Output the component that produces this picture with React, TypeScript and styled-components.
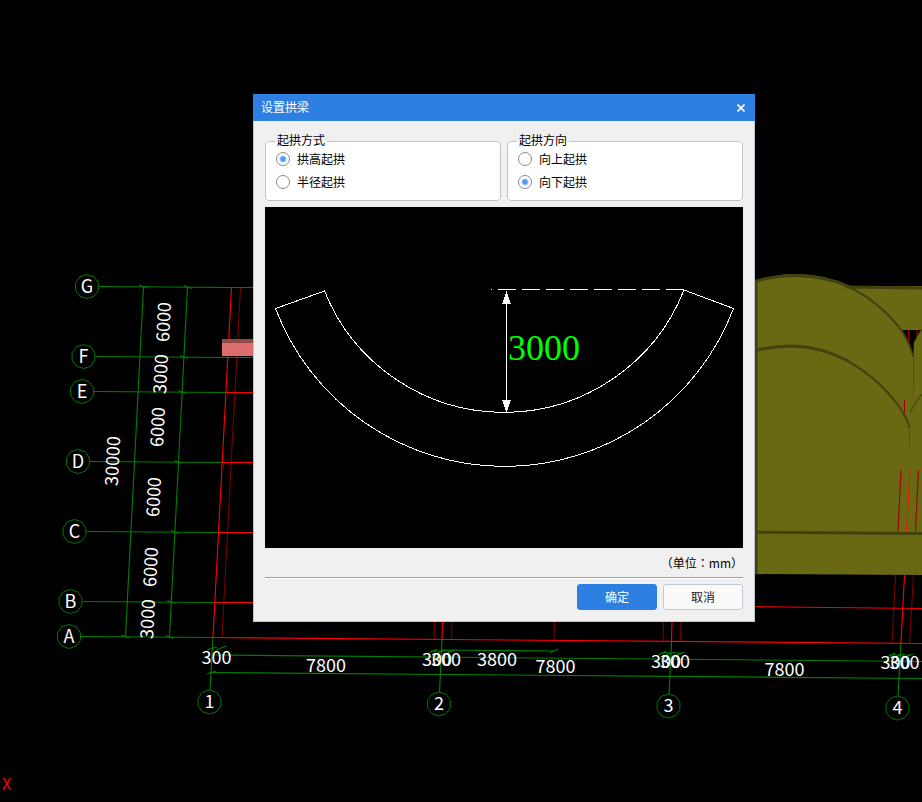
import React, { useState } from 'react';
import styled, { createGlobalStyle } from 'styled-components';

const GlobalStyle = createGlobalStyle`
  * { box-sizing: border-box; }
  html, body { margin: 0; background: #000; }
  body {
    font: 12px/16px "Noto Sans CJK SC", "Noto Sans", sans-serif;
    color: #000;
  }
`;

const Workspace = styled.main`
  position: relative;
  min-height: 100vh;
  overflow: hidden;
  background: #000;
`;

const Drawing = styled.svg`
  display: block;
  width: 100%;
  height: auto;
  fill: none;
  stroke-width: 1.1;
`;

const Label = styled.text`
  font: 18px "Noto Sans CJK SC", sans-serif;
  fill: #fff;
  text-anchor: middle;
`;

const AxisMark = styled.text`
  font: 16px "Noto Sans CJK SC", sans-serif;
  fill: #f00;
`;

const Dialog = styled.section`
  position: absolute;
  top: 94px;
  left: 253px;
  width: 502px;
  max-width: 100%;
  background: #f0f0f0;
`;

const TitleBar = styled.header`
  display: flex;
  align-items: center;
  justify-content: space-between;
  height: 27px;
  padding: 0 8px;
  background: #2d7fe2;
  color: #fff;
`;

const Title = styled.h1`
  margin: 0;
  padding-bottom: 2px;
  font-size: 12px;
  font-weight: 400;
`;

const CloseButton = styled.button`
  display: flex;
  align-items: center;
  justify-content: center;
  width: 12px;
  height: 16px;
  padding: 0;
  border: 0;
  background: none;
  color: #fff;
`;

const Content = styled.form`
  display: flex;
  flex-direction: column;
  padding: 12px 11px 11px;
  border: 1px solid #bac4d6;
  border-top: 0;
`;

const Groups = styled.div`
  display: grid;
  grid-template-columns: 1fr 1fr;
  gap: 6px;
`;

const Group = styled.fieldset`
  min-width: 0;
  margin: 0;
  padding: 0 10px 8px;
  border: 1px solid #c1c4cb;
  border-radius: 4px;
  background: #fff;
`;

const Legend = styled.legend`
  margin-left: -1px;
  padding: 0 2px 2px;
  line-height: 14px;
`;

const Option = styled.label`
  display: flex;
  align-items: center;
  gap: 7px;
  height: 20px;
  & + & { margin-top: 3px; }
`;

const Radio = styled.input`
  appearance: none;
  flex: none;
  width: 14px;
  height: 14px;
  margin: 0;
  border: 1px solid #8a8a8a;
  border-radius: 50%;
  background: #fff;
  &:checked {
    background: radial-gradient(circle, #4a9bf8 0 2px, #fff 4px);
  }
`;

const Preview = styled.svg`
  display: block;
  width: 100%;
  height: auto;
  margin-top: 6px;
  background: #000;
  fill: none;
  stroke: #fff;
  shape-rendering: crispEdges;
`;

const Measure = styled.text`
  font: 36px "Liberation Serif", serif;
  fill: #0f0;
  stroke: none;
`;

const Unit = styled.p`
  margin: 0;
  padding: 7px 0 6px;
  text-align: right;
`;

const Colon = styled.span`
  font-family: "Noto Sans CJK TC", sans-serif;
`;

const Actions = styled.footer`
  display: flex;
  justify-content: flex-end;
  gap: 6px;
  padding-top: 6px;
  border-top: 1px solid #a0a0a0;
  box-shadow: inset 0 1px #fff;
`;

const ActionButton = styled.button<{ $primary?: boolean }>`
  width: 80px;
  height: 26px;
  padding: 0;
  border: 1px solid ${(p) => (p.$primary ? '#2d7fe2' : '#c0c9da')};
  border-radius: 3px;
  background: ${(p) => (p.$primary ? '#2d7fe2' : '#fafafa')};
  color: ${(p) => (p.$primary ? '#fff' : '#222')};
  font: inherit;
`;

type Point = [number, number];

const rowAxes: { name: string; x: number; y: number; red: number }[] = [
  { name: 'G', x: 87, y: 286.5, red: 231 },
  { name: 'F', x: 83.5, y: 356.5, red: 228 },
  { name: 'E', x: 82, y: 391.5, red: 226 },
  { name: 'D', x: 78, y: 461.5, red: 222 },
  { name: 'C', x: 74.5, y: 531.5, red: 219 },
  { name: 'B', x: 70.5, y: 601.5, red: 215 },
  { name: 'A', x: 69, y: 636.5, red: 213 },
];

const columnAxes: { name: string; x: number; y: number; topX: number; topY: number }[] = [
  { name: '1', x: 209.5, y: 702, topX: 213, topY: 637 },
  { name: '2', x: 439, y: 704, topX: 442, topY: 640 },
  { name: '3', x: 668.5, y: 706, topX: 671.5, topY: 642 },
  { name: '4', x: 897.5, y: 708, topX: 901, topY: 643 },
];

const sideLabels: [string, number, number][] = [
  ['6000', 163, 322],
  ['3000', 160, 374],
  ['6000', 157, 427],
  ['30000', 112, 461],
  ['6000', 153, 497],
  ['6000', 150, 567],
  ['3000', 147, 619],
];

const bottomLabels: [string, number, number][] = [
  ['300', 216.5, 664],
  ['7800', 326, 672],
  ['300', 437, 666],
  ['300', 446, 666],
  ['3800', 497, 666],
  ['7800', 555.5, 673],
  ['300', 666, 668],
  ['300', 675, 668],
  ['7800', 784.5, 676],
  ['300', 895.5, 669],
  ['300', 904.5, 669],
];

const redLines: [number, number, number, number][] = [
  [231.5, 287, 213, 637],
  [213, 637.5, 922, 643.5],
  [443, 600, 442, 640],
  [672.5, 600, 671.5, 642],
  [904.5, 575, 901, 643],
  [740, 606.5, 922, 608.5],
];

const darkRedLines: [number, number, number, number][] = [
  [240.5, 287, 222, 637],
  [435, 600, 434, 639],
  [452.5, 600, 451.5, 640],
  [555, 600, 554, 640],
  [664, 600, 663, 641],
  [681.5, 600, 680.5, 642],
  [895.5, 575, 892, 643],
  [913.5, 575, 909.5, 643],
];

const bubble = (x: number, y: number) =>
  Array.from({ length: 10 }, (_, i) => {
    const angle = ((i * 36 - 90) * Math.PI) / 180;
    return `${(x + 12 * Math.cos(angle)).toFixed(1)},${(y + 12 * Math.sin(angle)).toFixed(1)}`;
  }).join(' ');

const rowTicks: Point[] = rowAxes.map(({ y }) => [187.5 - ((y - 287) * 18) / 350, y + 1]);

function Bubble({ x, y, name }: { x: number; y: number; name: string }) {
  return (
    <>
      <polygon points={bubble(x, y)} stroke="#007800" strokeWidth="1" />
      <Label x={x} y={y + 6}>{name}</Label>
    </>
  );
}

function Grid() {
  return (
    <>
      <g stroke="#008000">
        {rowAxes.map((a) => (
          <line key={a.name} x1={a.x + 12} y1={a.y} x2={a.red} y2={a.y + 1} />
        ))}
        <line x1="143.5" y1="287" x2="125.5" y2="637" />
        <line x1="187.5" y1="287" x2="169.5" y2="637" />
        {rowTicks.map(([x, y]) => (
          <path key={y} d={`M${x - 4} ${y - 2}l8 3`} />
        ))}
        <path d="M139 285l9 3M121 635l9 3" />
        <path d="M213 655L922 661.5M210 672.5L922 678.5M441 650L554 651" />
        <path d="M207 674l9-3M207 650l10-3M216 650l10-4M550 653l8-4" />
      </g>
      <g stroke="#780000">
        {darkRedLines.map(([x1, y1, x2, y2]) => (
          <line key={x1} x1={x1} y1={y1} x2={x2} y2={y2} />
        ))}
      </g>
      <g stroke="#ff0000">
        {redLines.map(([x1, y1, x2, y2]) => (
          <line key={x1} x1={x1} y1={y1} x2={x2} y2={y2} />
        ))}
        {rowAxes.slice(0, 6).map((a) => (
          <line key={a.name} x1={a.red} y1={a.y + 1} x2="300" y2={a.y + 1} />
        ))}
      </g>
      <g stroke="#008000">
        {columnAxes.map((a) => (
          <line key={a.name} x1={a.topX} y1={a.topY} x2={a.x + 0.5} y2={a.y - 12} />
        ))}
        {columnAxes.slice(1).map((a) => (
          <path
            key={a.name}
            d={`M${a.x - 10} ${a.y - 51}l8-4M${a.x - 4} ${a.y - 50}l10-4M${a.x + 6} ${a.y - 50}l10-4M${a.x - 8} ${a.y - 53}h22`}
          />
        ))}
      </g>
    </>
  );
}

function Building() {
  return (
    <>
      <path
        fill="#696914"
        d="M740 287Q768 274 795 274Q825 274 850 286L922 286V575L740 574Z"
      />
      <path stroke="#42420e" strokeWidth="3" d="M846 287L922 288" />
      <path fill="#000" d="M901 330H921Q917 336 914 343V357Q909 343 901 330Z" />
      <g stroke="#42420e">
        <path strokeWidth="3" d="M740 286Q768 275.500 796 275.500Q825 276 850 287" />
        <path strokeWidth="2" d="M848 286.500Q879 301 902 331Q909 342 913.500 357" />
        <path strokeWidth="3" d="M740 355Q765 346 793 346Q822 347 848 361" />
        <path strokeWidth="2" d="M846 360Q877 377 898 405Q907 418 909.500 427" />
        <path strokeWidth="3" d="M740 532L922 533.500" />
        <path strokeWidth="3" d="M756 281V574" />
        <path d="M922 329Q916 337 914 343M910 413Q914 404 922 394" />
        <path strokeWidth="0.6" d="M909.500 427V447M913.500 343V397" />
      </g>
      <g stroke="#a00000">
        <path d="M908.500 330V342M904.500 400V413M901 470L898 531M918.500 470L915.500 531M917 330V336" />
        <path stroke="#f01808" d="M910 470L906.500 531M913.500 390V406" />
      </g>
    </>
  );
}

function Beam() {
  return (
    <>
      <rect x="222" y="339" width="40" height="17" fill="#dd6e6e" />
      <rect x="222" y="339" width="40" height="4" fill="#924949" />
    </>
  );
}

function ArchPreview() {
  return (
    <Preview viewBox="0 0 478 341" role="img" aria-label="拱高 3000">
      <path d="M10.500 101.500L59.500 84A193.500 193.500 0 0 0 419 83L468.500 101.500A245 245 0 0 1 10.500 101.500" />
      <path strokeDasharray="18 6" d="M419 82.500H226" />
      <path d="M241.500 84V206" />
      <path fill="#fff" stroke="none" d="M241.500 84L246 97H237ZM241.500 206L246 193H237Z" />
      <Measure x="243" y="153">3000</Measure>
    </Preview>
  );
}

interface ChoiceProps {
  title: string;
  name: string;
  options: string[];
  initial: string;
}

function ChoiceGroup({ title, name, options, initial }: ChoiceProps) {
  const [value, setValue] = useState(initial);
  return (
    <Group>
      <Legend>{title}</Legend>
      {options.map((option) => (
        <Option key={option}>
          <Radio
            type="radio"
            name={name}
            value={option}
            checked={value === option}
            onChange={() => setValue(option)}
          />
          {option}
        </Option>
      ))}
    </Group>
  );
}

export default function App() {
  return (
    <>
      <GlobalStyle />
      <Workspace>
        <Drawing viewBox="0 0 922 802" aria-hidden="true">
          <Grid />
          <Building />
          <Beam />
          {[...rowAxes, ...columnAxes].map((a) => (
            <Bubble key={a.name} name={a.name} x={a.x} y={a.y} />
          ))}
          {sideLabels.map(([text, x, y]) => (
            <Label key={y} x={x} y={y + 7} transform={`rotate(-87 ${x} ${y})`}>
              {text}
            </Label>
          ))}
          {bottomLabels.map(([text, x, y]) => (
            <Label key={x} x={x} y={y}>{text}</Label>
          ))}
          <AxisMark x="2" y="790">X</AxisMark>
        </Drawing>
        <Dialog role="dialog" aria-labelledby="dialog-title">
          <TitleBar>
            <Title id="dialog-title">设置拱梁</Title>
            <CloseButton type="button" aria-label="关闭">
              <svg width="8" height="8" viewBox="0 0 8 8" stroke="currentColor" strokeWidth="1.6">
                <path d="M0.500 0.500L7.500 7.500M7.500 0.500L0.500 7.500" />
              </svg>
            </CloseButton>
          </TitleBar>
          <Content onSubmit={(e) => e.preventDefault()}>
            <Groups>
              <ChoiceGroup
                title="起拱方式"
                name="method"
                options={['拱高起拱', '半径起拱']}
                initial="拱高起拱"
              />
              <ChoiceGroup
                title="起拱方向"
                name="direction"
                options={['向上起拱', '向下起拱']}
                initial="向下起拱"
              />
            </Groups>
            <ArchPreview />
            <Unit>（单位<Colon>：</Colon>mm）</Unit>
            <Actions>
              <ActionButton $primary type="submit">确定</ActionButton>
              <ActionButton type="button">取消</ActionButton>
            </Actions>
          </Content>
        </Dialog>
      </Workspace>
    </>
  );
}
